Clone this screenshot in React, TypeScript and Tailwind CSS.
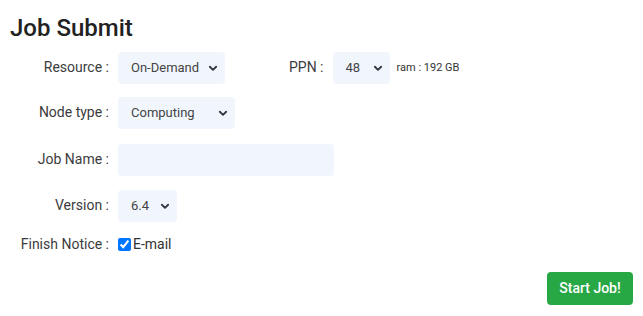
import React from "react";

const Chevron = () => (
  <svg
    className="pointer-events-none absolute right-[7px] top-1/2 -translate-y-1/2"
    width="10"
    height="10"
    viewBox="0 0 16 16"
    fill="none"
    stroke="#343a40"
    strokeWidth="3"
    strokeLinecap="round"
    strokeLinejoin="round"
  >
    <path d="M3 6l5 5 5-5" />
  </svg>
);

const Select = ({ value, options, width }: { value: string; options: string[]; width: string }) => {
  return (
    <div className={"relative h-8 " + width}>
      <select
        defaultValue={value}
        className="h-8 w-full appearance-none rounded bg-[#f1f6fd] pl-[13px] pr-6 text-[13px] text-[#444] outline-none"
      >
        {options.map((o) => (
          <option key={o}>{o}</option>
        ))}
      </select>
      <Chevron />
    </div>
  );
};

const Label = ({ text }: { text: string }) => (
  <label className="w-[99px] shrink-0 text-right text-[14px] text-[#3c3c3c]">{text}</label>
);

export default function App() {
  return (
    <div className="h-[316px] w-[643px] bg-white font-['Roboto',sans-serif] text-[#333]">
      <div className="px-[10px] pt-[14px]">
        <h1 className="text-[24px] font-medium leading-[1.2] text-[#222]">Job Submit</h1>

        <div className="mt-[9px] flex flex-col">
          {/* Resource + PPN */}
          <div className="flex items-center gap-[9px]">
            <Label text="Resource :" />
            <Select value="On-Demand" options={["On-Demand", "Reserved"]} width="w-[107px]" />
            <span className="ml-[55px] text-[14px] text-[#3c3c3c]">PPN :</span>
            <Select value="48" options={["48", "24", "12"]} width="w-[57px]" />
            <span className="-ml-[2px] text-[11px] text-[#333]">ram : 192 GB</span>
          </div>

          <div className="mt-[13px] flex items-center gap-[9px]">
            <Label text="Node type :" />
            <Select value="Computing" options={["Computing", "GPU"]} width="w-[117px]" />
          </div>

          <div className="mt-[15px] flex items-center gap-[9px]">
            <Label text="Job Name :" />
            <input className="h-8 w-[216px] rounded bg-[#f1f6fd] px-3 text-[13px] outline-none" />
          </div>

          <div className="mt-[14px] flex items-center gap-[9px]">
            <Label text="Version :" />
            <Select value="6.4" options={["6.4", "6.3"]} width="w-[59px]" />
          </div>

          <div className="mt-[13px] flex h-5 items-center gap-[9px]">
            <Label text="Finish Notice :" />
            <label className="flex items-center gap-[2px] text-[14px] text-[#333]">
              <input type="checkbox" defaultChecked className="m-0 h-[13px] w-[13px]" />
              <span>E-mail</span>
            </label>
          </div>
        </div>

        <div className="mt-[17px] flex justify-end">
          <button className="h-[33px] w-[86px] rounded bg-[#28a745] text-[14px] font-medium text-white">
            Start Job!
          </button>
        </div>
      </div>
    </div>
  );
}
